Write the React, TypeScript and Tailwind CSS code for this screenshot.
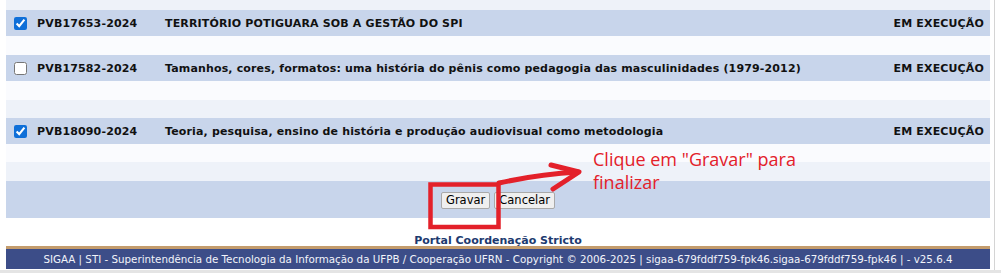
import React from "react";

type Projeto = {
  codigo: string;
  titulo: string;
  situacao: string;
  marcado: boolean;
};

const projetos: Projeto[] = [
  {
    codigo: "PVB17653-2024",
    titulo: "TERRITÓRIO POTIGUARA SOB A GESTÃO DO SPI",
    situacao: "EM EXECUÇÃO",
    marcado: true,
  },
  {
    codigo: "PVB17582-2024",
    titulo:
      "Tamanhos, cores, formatos: uma história do pênis como pedagogia das masculinidades (1979-2012)",
    situacao: "EM EXECUÇÃO",
    marcado: false,
  },
  {
    codigo: "PVB18090-2024",
    titulo:
      "Teoria, pesquisa, ensino de história e produção audiovisual como metodologia",
    situacao: "EM EXECUÇÃO",
    marcado: true,
  },
];

const verdana = "font-['Verdana','DejaVu_Sans',sans-serif]";

const LinhaProjeto = ({ p }: { p: Projeto }) => (
  <div className="flex h-[26px] items-center bg-[#c8d5eb] text-[11px] font-bold tracking-[0.15px] text-[#111]">
    <input
      type="checkbox"
      readOnly
      checked={p.marcado}
      className="ml-[8px] h-[13px] w-[13px] accent-[#0f6fd8]"
    />
    <span className="ml-[10px] w-[128px] pt-[2px]">{p.codigo}</span>
    <span className="flex-1 pt-[2px]">{p.titulo}</span>
    <span className="pr-[6px] pt-[2px]">{p.situacao}</span>
  </div>
);

export default function App() {
  return (
    <div className={`relative h-[273px] w-[1001px] overflow-hidden bg-white ${verdana}`}>
      <div className="flex h-[270px]">
        <div className="ml-[6px] w-[984px]">
          {/* listagem */}
          <div className="h-[10px] bg-[#eef2f9]" />
          <LinhaProjeto p={projetos[0]} />
          <div className="h-[19px] bg-[#fafbfe]" />
          <LinhaProjeto p={projetos[1]} />
          <div className="h-[19px] bg-[#fafbfe]" />
          <div className="h-[18px] bg-[#eef2f9]" />
          <LinhaProjeto p={projetos[2]} />
          <div className="h-[18px] bg-[#fafbfe]" />
          <div className="h-[19px] bg-[#eef2f9]" />

          {/* botoes */}
          <div className="flex h-[37px] items-center justify-center gap-[4px] bg-[#c8d5eb] pt-[2px]">
            <button className="h-[17px] rounded-[2px] border border-[#a9a9a9] bg-[#efefef] px-[4px] text-[11.5px] leading-none text-black">
              Gravar
            </button>
            <button className="h-[17px] rounded-[2px] border border-[#a9a9a9] bg-[#efefef] px-[4px] text-[11.5px] leading-none text-black">
              Cancelar
            </button>
          </div>

          <div className="h-[28px] pt-[17px] text-center text-[11px] font-bold leading-[12px] text-[#1d3a6f]">
            Portal Coordenação Stricto
          </div>

          {/* rodape */}
          <div className="border-t-[3px] border-[#c49c6c] bg-[#3c4d88] py-[3px] text-center text-[10.3px] leading-[14px] whitespace-nowrap text-[#f2f4fa]">
            SIGAA | STI - Superintendência de Tecnologia da Informação da UFPB /
            Cooperação UFRN - Copyright © 2006-2025 |
            sigaa-679fddf759-fpk46.sigaa-679fddf759-fpk46 | - v25.6.4
          </div>
        </div>
        <div className="ml-[4px] w-px bg-[#d4d4d4]" />
      </div>
      <div className="h-[3px] bg-[#e4e4e4]" />

      {/* anotacao em vermelho */}
      <svg
        className="pointer-events-none absolute left-0 top-0"
        width="1001"
        height="273"
        viewBox="0 0 1001 273"
      >
        <rect
          x="430.5"
          y="184.5"
          width="68"
          height="42.5"
          fill="none"
          stroke="#e3202a"
          strokeWidth="4.5"
        />
        <path
          d="M499 183 Q540 174 578 172"
          fill="none"
          stroke="#e3202a"
          strokeWidth="5"
          strokeLinecap="round"
        />
        <path
          d="M551 165 L579 172 L553 189"
          fill="none"
          stroke="#e3202a"
          strokeWidth="5"
          strokeLinecap="round"
          strokeLinejoin="round"
        />
      </svg>
      <div className="absolute left-[593px] top-[148px] font-['Open_Sans',sans-serif] text-[18px] leading-[23px] text-[#e3202a]">
        Clique em "Gravar" para
        <br />
        finalizar
      </div>
    </div>
  );
}
